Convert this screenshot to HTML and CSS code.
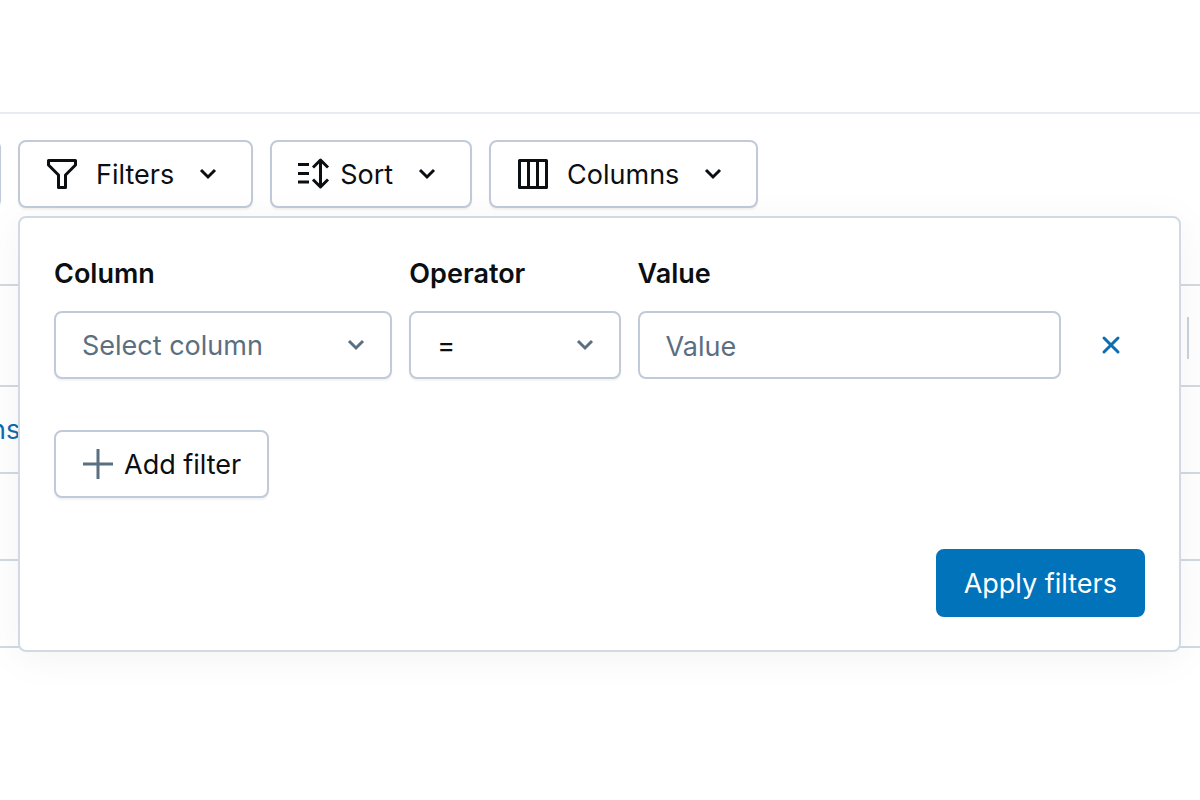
FILE: index.html
```html
<!DOCTYPE html>
<html lang="en">
<head>
<meta charset="utf-8">
<meta name="viewport" content="width=device-width, initial-scale=1">
<title>Filters</title>
<link rel="stylesheet" href="styles.css">
</head>
<body>
<header class="page-header"></header>
<main class="content">
  <div class="toolbar">
    <button class="btn btn-search" type="button" aria-label="Search"></button>
    <button class="btn" type="button" aria-expanded="true">
      <svg class="icon icon-lead" viewBox="0 0 32 32" aria-hidden="true"><path d="M2.500 2.500h27v4.500L19.500 17v12.500h-7V17L2.500 7z"/></svg>
      <span>Filters</span>
      <svg class="chevron" viewBox="0 0 20 20" aria-hidden="true"><path d="M3 6l7 7 7-7"/></svg>
    </button>
    <button class="btn" type="button">
      <svg class="icon icon-tight" viewBox="0 0 32 32" aria-hidden="true"><path d="M0 6.500h11M0 15.500h11M0 24h11M22.500 3v26M15 9.500l7.500-7.500 7.500 7.500M15 21.500l7.500 7.500 7.500-7.500"/></svg>
      <span>Sort</span>
      <svg class="chevron" viewBox="0 0 20 20" aria-hidden="true"><path d="M3 6l7 7 7-7"/></svg>
    </button>
    <button class="btn" type="button">
      <svg class="icon icon-lead" viewBox="0 0 32 32" aria-hidden="true"><path d="M2.500 2.500h27v27h-27zM11.500 2.500v27M20.500 2.500v27"/></svg>
      <span>Columns</span>
      <svg class="chevron" viewBox="0 0 20 20" aria-hidden="true"><path d="M3 6l7 7 7-7"/></svg>
    </button>
  </div>

  <table class="grid">
    <thead><tr><th></th><th><span class="resizer"></span></th></tr></thead>
    <tbody>
      <tr><td><a href="#">ns</a></td><td></td></tr>
      <tr><td></td><td></td></tr>
      <tr><td></td><td></td></tr>
    </tbody>
  </table>

  <form class="popover">
    <div class="filter-row">
      <div class="field">
        <label for="column">Column</label>
        <div class="select">
          <select id="column" class="control placeholder"><option>Select column</option></select>
          <svg class="chevron" viewBox="0 0 20 20" aria-hidden="true"><path d="M3 6l7 7 7-7"/></svg>
        </div>
      </div>
      <div class="field">
        <label for="operator">Operator</label>
        <div class="select">
          <select id="operator" class="control"><option>=</option></select>
          <svg class="chevron" viewBox="0 0 20 20" aria-hidden="true"><path d="M3 6l7 7 7-7"/></svg>
        </div>
      </div>
      <div class="field">
        <label for="value">Value</label>
        <input id="value" class="control" type="text" placeholder="Value">
      </div>
      <button class="remove" type="button" aria-label="Remove filter">
        <svg viewBox="0 0 20 20" aria-hidden="true"><path d="M3 3l14 14M17 3L3 17"/></svg>
      </button>
    </div>
    <button class="btn" type="button">
      <svg class="icon icon-tight icon-muted" viewBox="0 0 32 32" aria-hidden="true"><path d="M16 1v30M1 16h30"/></svg>
      <span>Add filter</span>
    </button>
    <button class="btn btn-primary" type="submit"><span>Apply filters</span></button>
  </form>
</main>
</body>
</html>
```
FILE: styles.css
```css
* {
  box-sizing: border-box;
}

html {
  overflow-x: hidden;
}

body {
  min-height: 100vh;
  margin: 0;
  background: #fff;
  color: #0b0f12;
  font: 400 27px/32px Inter, "Liberation Sans", sans-serif;
}

button,
input,
select {
  font: inherit;
  color: inherit;
}

svg {
  flex: none;
  fill: none;
  stroke: currentColor;
  stroke-width: 3;
}

.page-header {
  height: 114px;
  border-bottom: 2px solid #e8ecf0;
}

.content {
  position: relative;
}

.toolbar {
  display: flex;
  gap: 17px;
  margin-left: -100px;
  padding-top: 26px;
}

.btn {
  display: inline-flex;
  align-items: center;
  height: 68px;
  padding: 0 26px;
  border: 2px solid #c0cad8;
  border-radius: 8px;
  background: #fff;
  box-shadow: 0 2px 2px rgba(0, 0, 0, 0.05);
  white-space: nowrap;
}

.btn span {
  padding-top: 2px;
}

.btn-search {
  width: 101px;
}

.icon {
  width: 32px;
  height: 32px;
  stroke-linejoin: round;
}

.icon-lead {
  margin-right: 18px;
}

.icon-tight {
  margin-right: 10px;
}

.icon-muted {
  color: #5a6f80;
}

.chevron {
  width: 20px;
  height: 20px;
}

.toolbar .chevron {
  margin: 0 7px 0 24px;
}

.grid {
  width: 100%;
  margin-top: 76px;
  border-collapse: separate;
  border-spacing: 0;
  border-top: 2px solid #d1d9e1;
}

.grid th,
.grid td {
  height: 87px;
  padding: 0;
  border-bottom: 2px solid #d1d9e1;
  text-align: left;
}

.grid th {
  height: 101px;
}

.grid a {
  margin-left: -10px;
  color: #0e6db0;
  text-decoration: none;
}

.resizer {
  display: block;
  width: 2px;
  height: 42px;
  margin: 4px 11px 0 auto;
  background: #c8d3dc;
}

.popover {
  position: absolute;
  top: 102px;
  left: 18px;
  right: 19px;
  display: flex;
  flex-direction: column;
  align-items: flex-start;
  gap: 51px;
  padding: 34px 34px 33px;
  border: 2px solid #d1d9e4;
  border-radius: 8px;
  background: #fff;
  box-shadow: 0 6px 40px rgba(0, 0, 0, 0.05);
}

.filter-row {
  display: grid;
  grid-template-columns: 338fr 211fr 423fr 67px;
  gap: 17px;
  align-items: end;
  width: 100%;
}

.field label {
  display: block;
  margin-bottom: 15px;
  font-weight: 600;
  line-height: 44px;
}

.select {
  position: relative;
}

.select .chevron {
  position: absolute;
  top: 24px;
  right: 26px;
  color: #5a6f80;
  pointer-events: none;
}

.control {
  display: block;
  width: 100%;
  height: 68px;
  padding: 2px 26px 0;
  border: 2px solid #c0cad8;
  border-radius: 8px;
  background: #fff;
  appearance: none;
}

.select .control {
  box-shadow: 0 2px 2px rgba(0, 0, 0, 0.05);
}

.placeholder,
.control::placeholder {
  color: #5a6f80;
  opacity: 1;
}

.remove {
  display: grid;
  place-items: center;
  height: 68px;
  padding: 0;
  border: 0;
  background: none;
  color: #0e6db0;
}

.remove svg {
  width: 20px;
  height: 20px;
  stroke-linecap: round;
}

.btn-primary {
  align-self: flex-end;
  border-color: #0073ba;
  background: #0073ba;
  box-shadow: none;
  color: #fff;
}
```
